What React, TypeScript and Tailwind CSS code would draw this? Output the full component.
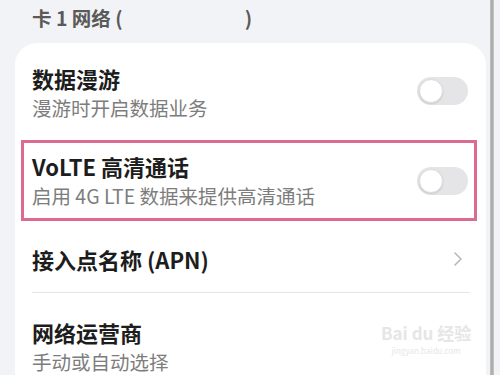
import { ChevronRight } from "lucide-react";

function Toggle({ className = "" }: { className?: string }) {
  return (
    <div className={"relative h-[28px] w-[51px] shrink-0 rounded-full bg-[#e5e5e7] " + className}>
      <div className="absolute left-[2px] top-[2px] h-[24px] w-[24px] rounded-full border border-[#dcdcdc] bg-white shadow-[0_1px_2px_rgba(0,0,0,0.12)]" />
    </div>
  );
}

function TwoLine({ title, sub }: { title: string; sub: string }) {
  return (
    <div className="flex flex-col">
      <span className="text-[22px] font-bold leading-[30px] text-[#1d1d1d]">{title}</span>
      <span className="text-[19.5px] leading-[30px] text-[#7d7d7d]">{sub}</span>
    </div>
  );
}

export default function App() {
  return (
    <div
      className="relative h-[375px] w-[500px] overflow-hidden bg-[#f2f3f6]"
      style={{ fontFamily: '"Noto Sans CJK SC", "Noto Sans", sans-serif' }}
    >
      {/* section header */}
      <div className="h-[43px] whitespace-pre pl-[32px] text-[19.5px] font-semibold leading-[36px] text-[#5a5a5a]">
        卡 1 网络 (<span className="inline-block w-[122px]" />)
      </div>

      {/* card */}
      <div className="ml-[15px] w-[471px] rounded-t-[22px] bg-white">
        <div className="flex h-[94px] items-center justify-between pl-[17px] pr-[18px] pt-[6px]">
          <TwoLine title="数据漫游" sub="漫游时开启数据业务" />
          <Toggle className="-mt-[4px]" />
        </div>

        <div className="relative flex h-[88px] items-center justify-between pl-[17px] pr-[18px]">
          <TwoLine title="VoLTE 高清通话" sub="启用 4G LTE 数据来提供高清通话" />
          <Toggle />
          <div className="pointer-events-none absolute bottom-[4px] left-[6px] right-[9px] top-[3px] border-[3px] border-[#dc6b8f]" />
        </div>

        <div className="flex h-[67px] items-center justify-between pl-[17px] pr-[16px]">
          <span className="text-[22px] font-bold leading-[30px] text-[#1d1d1d]">接入点名称 (APN)</span>
          <ChevronRight className="h-[24px] w-[24px] text-[#b8b8b8]" strokeWidth={1.6} />
        </div>

        <div className="ml-[17px] mr-[16px] h-px bg-[#e6e6e6]" />

        <div className="relative flex h-[108px] items-center justify-between pl-[17px] pr-[18px]">
          <TwoLine title="网络运营商" sub="手动或自动选择" />
          {/* watermark */}
          <div className="pointer-events-none absolute left-[366px] top-[28px] flex flex-col items-center whitespace-nowrap text-[#e6e6e6]">
            <span className="text-[17px] font-bold leading-[24px]">Bai du 经验</span>
            <span className="text-[8px] leading-[12px]">jingyan.baidu.com</span>
          </div>
        </div>
      </div>

      {/* scroll edge */}
      <div className="absolute bottom-0 right-[6px] top-0 w-[4px] bg-gradient-to-r from-[#c4c4c4] via-[#a6a6a6] to-[#c8c8c8]" />
    </div>
  );
}
